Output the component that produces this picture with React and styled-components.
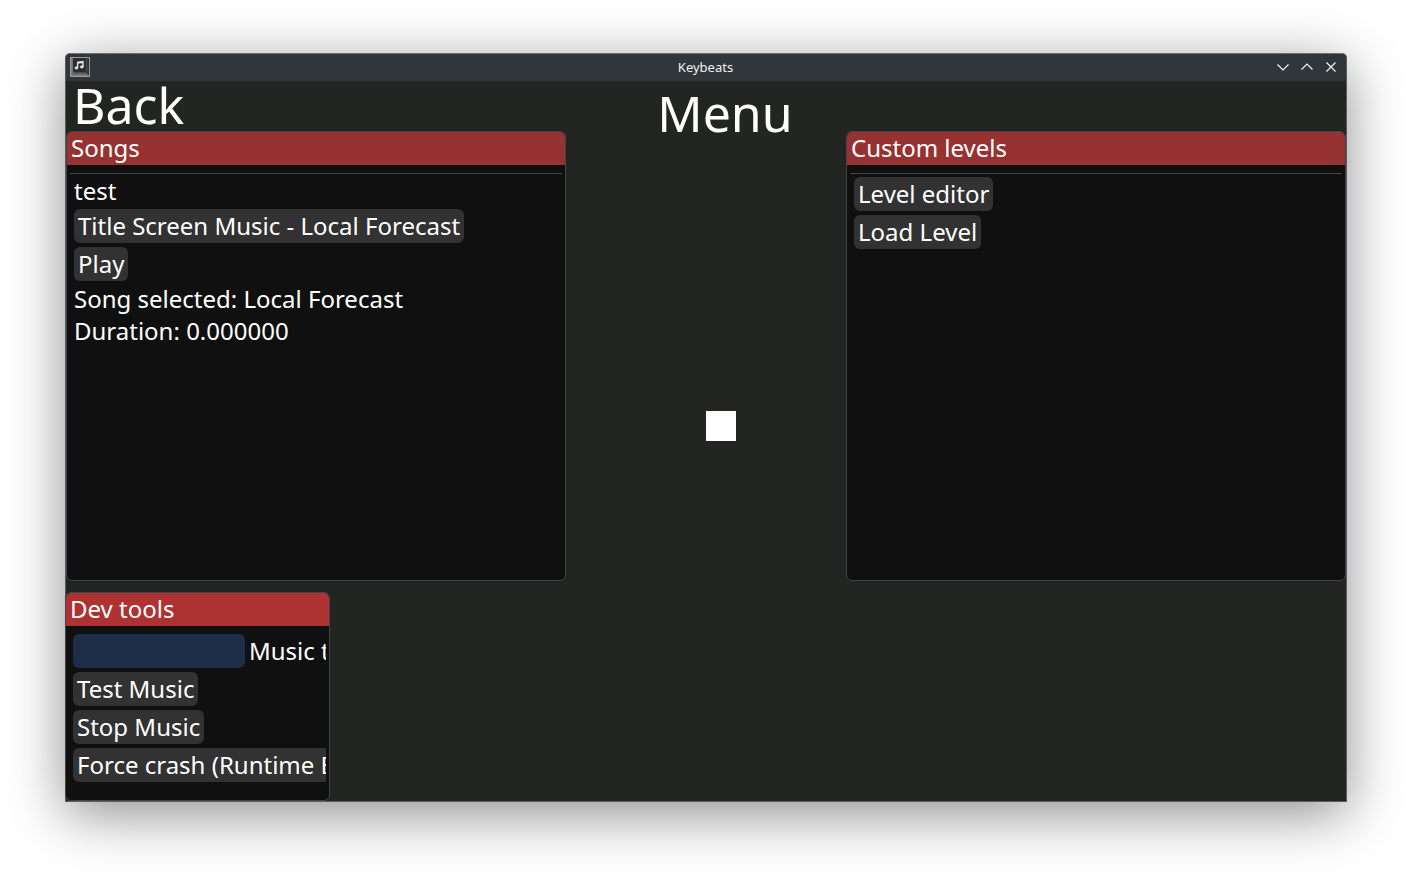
import React from "react";
import styled, { createGlobalStyle } from "styled-components";

const GlobalStyle = createGlobalStyle`
  *, *::before, *::after { box-sizing: border-box; }
  body {
    margin: 0;
    background: #fff;
    color: #fff;
    font-family: "Noto Sans", "Open Sans", sans-serif;
    font-size: 24px;
    line-height: 28px;
  }
  button, input { font: inherit; color: inherit; }
  h1, h2, p { margin: 0; font-weight: 400; }
`;

const Desktop = styled.div`
  display: flex;
  min-height: 100vh;
  padding: 53px 66px 78px 65px;
`;

const AppWindow = styled.main`
  display: flex;
  flex-direction: column;
  flex: 1;
  min-width: 0;
  border: 1px solid #5b5c62;
  border-top-color: #6c7074;
  border-radius: 5px 5px 0 0;
  background: #232522;
  box-shadow: 0 12px 56px rgba(0, 0, 0, 0.45);
`;

const TitleBar = styled.header`
  display: grid;
  grid-template-columns: 1fr auto 1fr;
  align-items: center;
  height: 27px;
  padding: 0 5px 1px 4px;
  border-radius: 4px 4px 0 0;
  background: #31363b;
`;

const WindowTitle = styled.span`
  font-size: 13px;
  line-height: 20px;
  color: #f0f1f2;
`;

const WindowControls = styled.div`
  display: flex;
  justify-content: flex-end;
  gap: 4px;
`;

const ControlButton = styled.button`
  display: flex;
  align-items: center;
  justify-content: center;
  width: 20px;
  height: 20px;
  padding: 0;
  border: 0;
  background: none;
  color: #f4f5f5;
`;

const Stage = styled.div`
  display: grid;
  grid-template-columns: 25fr 14fr 25fr;
`;

const Column = styled.div`
  display: flex;
  flex-direction: column;
  min-width: 0;
  padding-top: ${({ $top }) => $top || 0}px;
`;

const BackButton = styled.button`
  align-self: flex-start;
  height: 50px;
  padding: 0 7px 2px;
  border: 0;
  background: none;
  font-size: 50px;
  line-height: 48px;
`;

const Heading = styled.h1`
  padding-left: 38px;
  text-align: center;
  font-size: 50px;
  line-height: 64px;
`;

const Player = styled.div`
  width: 30px;
  height: 30px;
  margin: 266px 0 0 50%;
  background: #fff;
`;

const Panel = styled.section`
  display: flex;
  flex-direction: column;
  min-height: ${({ $height }) => $height}px;
  border: 1px solid #43434d;
  border-radius: 6px;
  background: #101010;
  overflow: hidden;
`;

const PanelTitle = styled.h2`
  height: 33px;
  padding: 0 4px;
  background: ${({ $active }) => ($active ? "#ae3232" : "#963232")};
  font-size: 24px;
  line-height: 32px;
`;

const Rule = styled.hr`
  height: 1px;
  margin: 8px 3px 0;
  border: 0;
  background: #43434a;
`;

const PanelBody = styled.div`
  display: flex;
  flex-direction: column;
  align-items: flex-start;
  gap: 4px;
  padding: ${({ $top }) => $top}px 0 0;
  margin: 0 3px 0 7px;
  overflow: hidden;
`;

const Line = styled.p`
  line-height: 28px;
  white-space: nowrap;
`;

const ActionButton = styled.button`
  flex: none;
  height: 34px;
  padding: 0 4px;
  border: 0;
  border-radius: 6px;
  background: #323232;
  line-height: 34px;
  white-space: nowrap;
`;

const Field = styled.label`
  display: flex;
  gap: 4px;
  line-height: 34px;
  white-space: nowrap;
`;

const TextInput = styled.input`
  flex: none;
  width: 172px;
  height: 34px;
  padding: 0 4px;
  border: 0;
  border-radius: 6px;
  background: #1e2e49;
`;

const DevArea = styled.div`
  width: 265px;
  margin: 11px 0 0 -1px;
`;

const AppIcon = () => (
  <svg width="20" height="20" viewBox="0 0 20 20" aria-hidden="true">
    <defs>
      <linearGradient id="key" x1="0" y1="0" x2="1" y2="0">
        <stop offset="0" stopColor="#8a8a8a" />
        <stop offset="0.3" stopColor="#4a4a4a" />
        <stop offset="1" stopColor="#303030" />
      </linearGradient>
      <linearGradient id="lip" x1="0" y1="0" x2="0" y2="1">
        <stop offset="0" stopColor="#444" />
        <stop offset="1" stopColor="#888" />
      </linearGradient>
    </defs>
    <rect x="0.5" y="0.5" width="19" height="19" fill="url(#key)" stroke="#999" />
    <path d="M1 19L4 15H16L19 19Z" fill="url(#lip)" />
    <rect x="3" y="1" width="13" height="14" rx="1" fill="#2c2c2c" />
    <path d="M16.5 2v13" stroke="#505050" />
    <path d="M7.6 11V5.4L13 4.6V10M7.6 6L13 5.2" fill="none" stroke="#e4e4e4" strokeWidth="1.4" />
    <ellipse cx="6.4" cy="11" rx="1.8" ry="1.4" fill="#e4e4e4" />
    <ellipse cx="11.8" cy="10" rx="1.8" ry="1.4" fill="#e4e4e4" />
  </svg>
);

const ControlIcon = ({ d }) => (
  <svg width="20" height="20" viewBox="0 0 20 20" fill="none" stroke="currentColor" strokeWidth="1.2" aria-hidden="true">
    <path d={d} />
  </svg>
);

const controls = [
  { label: "Minimize", d: "M4.5 7.5L10 13L15.5 7.5" },
  { label: "Maximize", d: "M4.5 12.5L10 7L15.5 12.5" },
  { label: "Close", d: "M5.5 5.5L14.5 14.5M14.5 5.5L5.5 14.5" },
];

export default function App() {
  return (
    <>
      <GlobalStyle />
      <Desktop>
        <AppWindow>
          <TitleBar>
            <AppIcon />
            <WindowTitle>Keybeats</WindowTitle>
            <WindowControls>
              {controls.map(({ label, d }) => (
                <ControlButton key={label} type="button" aria-label={label}>
                  <ControlIcon d={d} />
                </ControlButton>
              ))}
            </WindowControls>
          </TitleBar>
          <Stage>
            <Column>
              <BackButton type="button">Back</BackButton>
              <Panel $height={450}>
                <PanelTitle>Songs</PanelTitle>
                <Rule />
                <PanelBody $top={3}>
                  <Line>test</Line>
                  <ActionButton type="button">Title Screen Music - Local Forecast</ActionButton>
                  <ActionButton type="button">Play</ActionButton>
                  <Line>Song selected: Local Forecast</Line>
                  <Line>Duration: 0.000000</Line>
                </PanelBody>
              </Panel>
            </Column>
            <Column>
              <Heading>Menu</Heading>
              <Player />
            </Column>
            <Column $top={50}>
              <Panel $height={450}>
                <PanelTitle>Custom levels</PanelTitle>
                <Rule />
                <PanelBody $top={3}>
                  <ActionButton type="button">Level editor</ActionButton>
                  <ActionButton type="button">Load Level</ActionButton>
                </PanelBody>
              </Panel>
            </Column>
          </Stage>
          <DevArea>
            <Panel $height={209}>
              <PanelTitle $active>Dev tools</PanelTitle>
              <PanelBody $top={8}>
                <Field>
                  <TextInput type="text" />
                  Music t
                </Field>
                <ActionButton type="button">Test Music</ActionButton>
                <ActionButton type="button">Stop Music</ActionButton>
                <ActionButton type="button">Force crash (Runtime Error)</ActionButton>
              </PanelBody>
            </Panel>
          </DevArea>
        </AppWindow>
      </Desktop>
    </>
  );
}
